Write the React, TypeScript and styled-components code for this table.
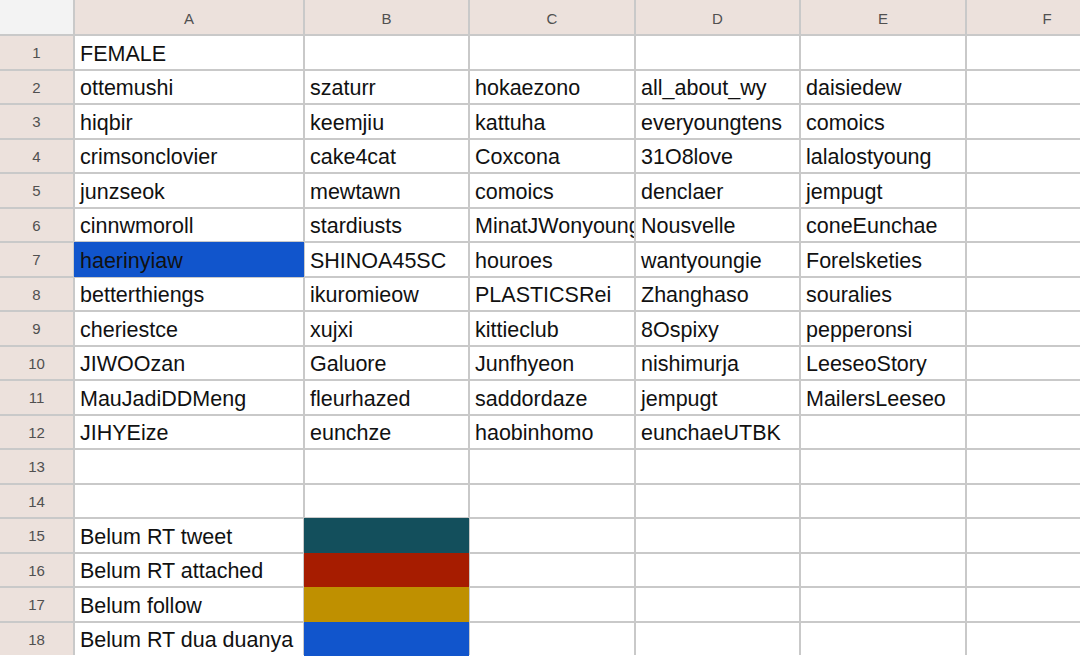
import React from 'react';
import styled, { createGlobalStyle } from 'styled-components';

const GlobalStyle = createGlobalStyle`
  html, body {
    margin: 0;
    padding: 0;
    background: #ffffff;
    overflow: hidden;
  }
`;

const Viewport = styled.div`
  width: 1080px;
  height: 658px;
  overflow: hidden;
`;

const Sheet = styled.div`
  display: grid;
  grid-template-columns: 73px 228px 163px 164px 163px 164px 160px;
  grid-template-rows: 34px repeat(18, 32.5px);
  gap: 2px;
  background: #c9c9c9;
  width: 1127px;
  font-family: 'Liberation Sans', Arial, sans-serif;
`;

const Corner = styled.div`
  background: #f3f3f3;
`;

const ColHead = styled.div`
  background: #ece1dc;
  color: #505050;
  font-size: 15px;
  display: flex;
  align-items: center;
  justify-content: center;
  padding-top: 2px;
`;

const RowHead = styled.div`
  background: #ece1dc;
  color: #505050;
  font-size: 15px;
  display: flex;
  align-items: center;
  justify-content: center;
  padding-top: 1px;
`;

const Cell = styled.div<{ fill?: string }>`
  position: relative;
  background: ${p => p.fill || '#ffffff'};
  box-shadow: ${p => (p.fill ? `0 0 0 1px ${p.fill}` : 'none')};
  z-index: ${p => (p.fill ? 1 : 0)};
  color: #111111;
  font-size: 21.5px;
  display: flex;
  align-items: center;
  padding: 4px 5px 0 5px;
  white-space: nowrap;
  overflow: hidden;
`;

const cols = ['A', 'B', 'C', 'D', 'E', 'F'];

const data: string[][] = [
  ['FEMALE', '', '', '', '', ''],
  ['ottemushi', 'szaturr', 'hokaezono', 'all_about_wy', 'daisiedew', ''],
  ['hiqbir', 'keemjiu', 'kattuha', 'everyoungtens', 'comoics', ''],
  ['crimsonclovier', 'cake4cat', 'Coxcona', '31O8love', 'lalalostyoung', ''],
  ['junzseok', 'mewtawn', 'comoics', 'denclaer', 'jempugt', ''],
  ['cinnwmoroll', 'stardiusts', 'MinatJWonyoung', 'Nousvelle', 'coneEunchae', ''],
  ['haerinyiaw', 'SHINOA45SC', 'houroes', 'wantyoungie', 'Forelsketies', ''],
  ['betterthiengs', 'ikuromieow', 'PLASTICSRei', 'Zhanghaso', 'souralies', ''],
  ['cheriestce', 'xujxi', 'kittieclub', '8Ospixy', 'pepperonsi', ''],
  ['JIWOOzan', 'Galuore', 'Junfhyeon', 'nishimurja', 'LeeseoStory', ''],
  ['MauJadiDDMeng', 'fleurhazed', 'saddordaze', 'jempugt', 'MailersLeeseo', ''],
  ['JIHYEize', 'eunchze', 'haobinhomo', 'eunchaeUTBK', '', ''],
  ['', '', '', '', '', ''],
  ['', '', '', '', '', ''],
  ['Belum RT tweet', '', '', '', '', ''],
  ['Belum RT attached', '', '', '', '', ''],
  ['Belum follow', '', '', '', '', ''],
  ['Belum RT dua duanya', '', '', '', '', ''],
];

// fills keyed by "row-col"
const fills: Record<string, string> = {
  '6-0': '#1155cc',
  '14-1': '#134f5c',
  '15-1': '#a61c00',
  '16-1': '#bf9000',
  '17-1': '#1155cc',
};

const App: React.FC = () => {
  return (
    <>
      <GlobalStyle />
      <Viewport>
        <Sheet>
          <Corner />
          {cols.map(c => (
            <ColHead key={c}>{c}</ColHead>
          ))}
          {data.map((row, r) => (
            <React.Fragment key={r}>
              <RowHead>{r + 1}</RowHead>
              {row.map((text, c) => (
                <Cell key={c} fill={fills[`${r}-${c}`]}>
                  {text}
                </Cell>
              ))}
            </React.Fragment>
          ))}
        </Sheet>
      </Viewport>
    </>
  );
};

export default App;
